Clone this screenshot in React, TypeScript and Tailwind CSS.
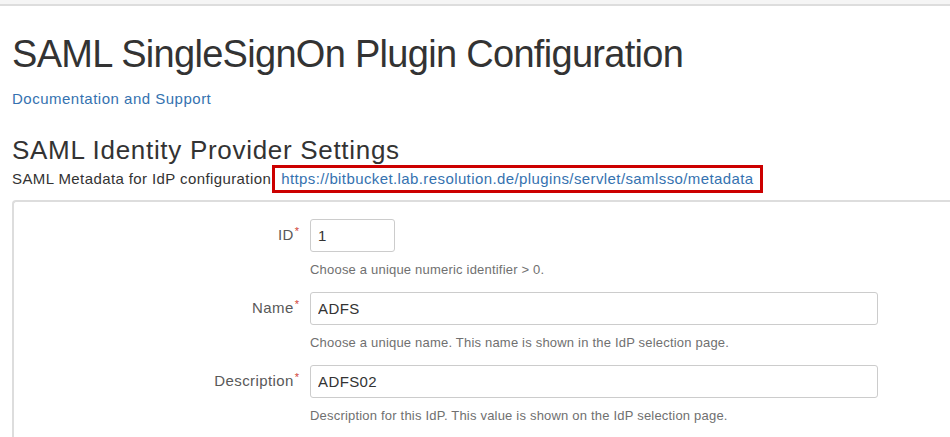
import React from "react";

const font = { fontFamily: '"Liberation Sans", Arial, sans-serif' };

interface FieldProps {
  label: string;
  value: string;
  help: string;
  short?: boolean;
}

const Field: React.FC<FieldProps> = ({ label, value, help, short }) => (
  <div className="flex mb-[14px]">
    <div className="w-[296px] shrink-0 flex justify-end items-start pt-[7px] pr-[11px]">
      <span className="text-[15px] text-[#595959] leading-[18px] tracking-[0.4px]">{label}</span>
      <span className="text-[11px] text-[#d04437] leading-[10px] ml-[1px]">*</span>
    </div>
    <div className="flex flex-col">
      <input
        readOnly
        value={value}
        className={`${short ? "w-[85px]" : "w-[568px]"} h-[33px] border border-[#ccc] rounded-[3px] px-[7px] text-[15px] text-[#333] bg-white outline-none tracking-[0.4px]`}
        style={font}
      />
      <div className="text-[13px] text-[#707070] mt-[9px] leading-[17px] tracking-[0.2px]">{help}</div>
    </div>
  </div>
);

export default function App() {
  return (
    <div className="w-[950px] h-[437px] overflow-hidden bg-white" style={font}>
      <div className="h-[6px] bg-[#f5f5f5] border-b-2 border-[#ddd]" />
      <div className="pl-[12px]">
        <h1 className="text-[38px] text-[#333] leading-[44px] mt-[26px] tracking-[-0.7px]">
          SAML SingleSignOn Plugin Configuration
        </h1>
        <a className="block text-[15px] text-[#3572b0] mt-[14px] leading-[18px] tracking-[0.5px]">
          Documentation and Support
        </a>
        <h2 className="text-[26px] text-[#333] leading-[28px] mt-[28px] tracking-[0.7px]">
          SAML Identity Provider Settings
        </h2>
        <div className="flex items-center text-[15px] text-[#333] leading-[18px] tracking-[0.4px] mt-[1px]">
          <span>SAML Metadata for IdP configuration</span>
          <span className="ml-[1px] border-[3px] border-[#c00] px-[6px] py-[2px] text-[#3572b0]">
            https://bitbucket.lab.resolution.de/plugins/servlet/samlsso/metadata
          </span>
        </div>
        <div className="mt-[7px] border-2 border-r-0 border-[#ddd] rounded-l-[4px] pt-[17px] h-[300px]">
          <Field label="ID" value="1" help="Choose a unique numeric identifier > 0." short />
          <Field
            label="Name"
            value="ADFS"
            help="Choose a unique name. This name is shown in the IdP selection page."
          />
          <Field
            label="Description"
            value="ADFS02"
            help="Description for this IdP. This value is shown on the IdP selection page."
          />
        </div>
      </div>
    </div>
  );
}
